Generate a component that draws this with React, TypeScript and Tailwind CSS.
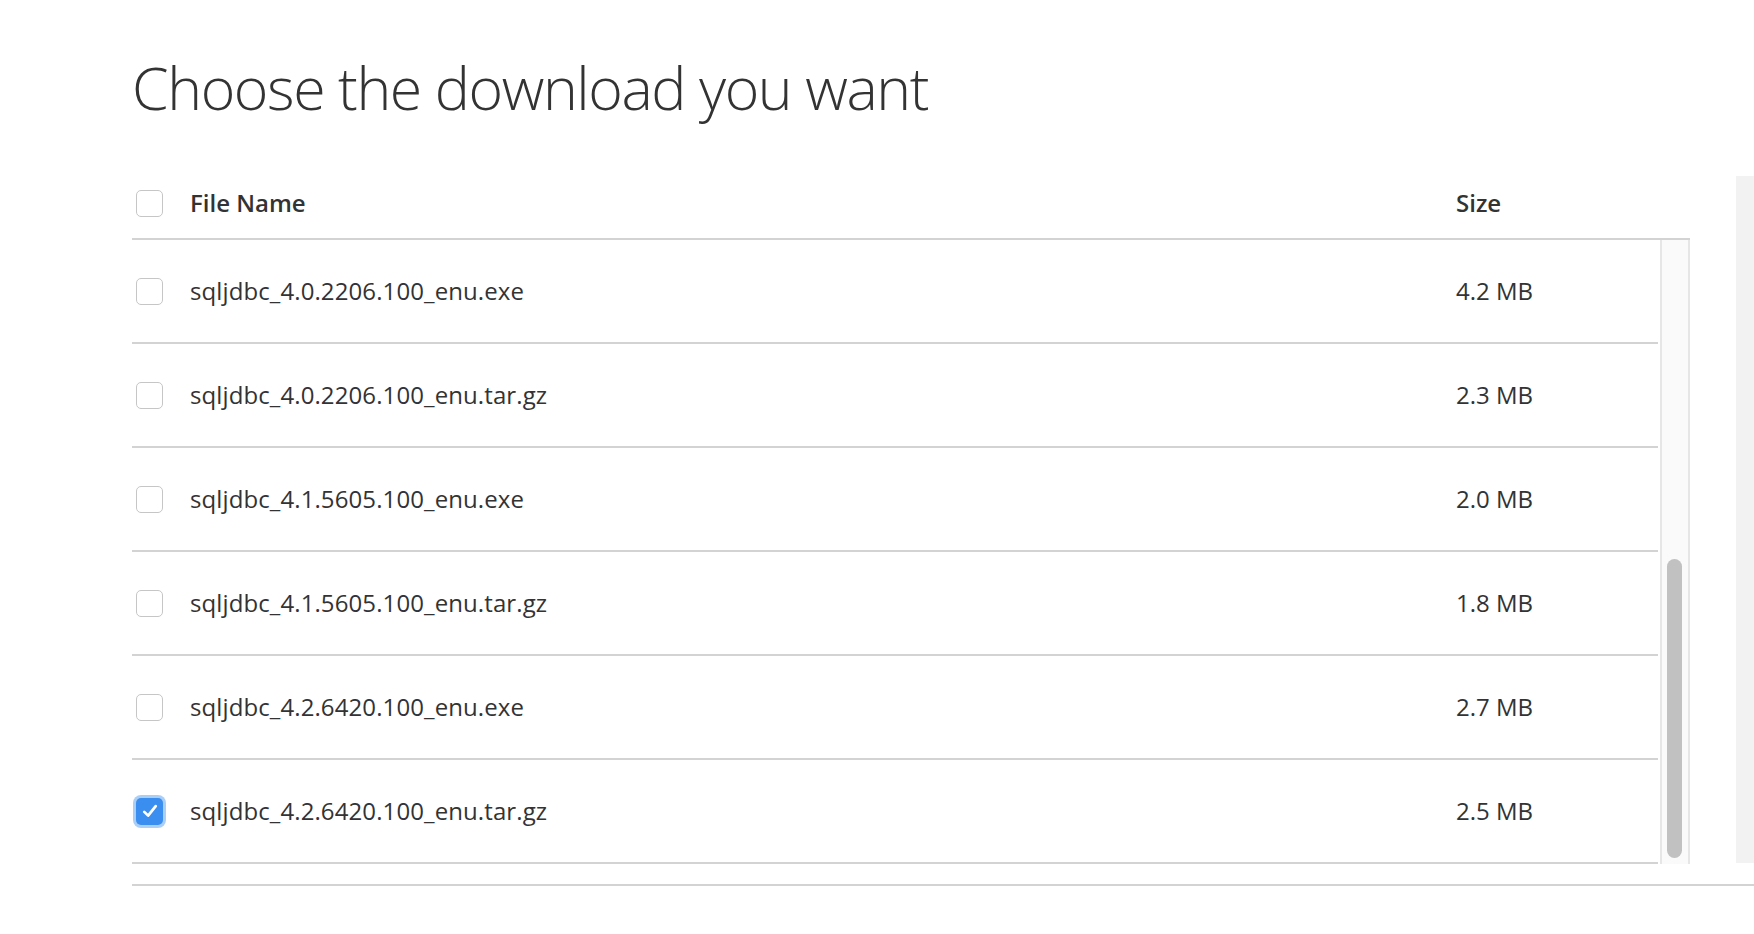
import { useState } from "react";

type FileRow = { name: string; size: string };

const FILES: FileRow[] = [
  { name: "sqljdbc_4.0.2206.100_enu.exe", size: "4.2 MB" },
  { name: "sqljdbc_4.0.2206.100_enu.tar.gz", size: "2.3 MB" },
  { name: "sqljdbc_4.1.5605.100_enu.exe", size: "2.0 MB" },
  { name: "sqljdbc_4.1.5605.100_enu.tar.gz", size: "1.8 MB" },
  { name: "sqljdbc_4.2.6420.100_enu.exe", size: "2.7 MB" },
  { name: "sqljdbc_4.2.6420.100_enu.tar.gz", size: "2.5 MB" },
];

function Checkbox({ checked, onChange }: { checked: boolean; onChange: () => void }) {
  return (
    <button
      type="button"
      role="checkbox"
      aria-checked={checked}
      onClick={onChange}
      className={`flex h-[27px] w-[27px] items-center justify-center rounded-[5px] ${
        checked
          ? "bg-[#3a8ef0] ring-[3px] ring-[#a9cff8]"
          : "border-[1.5px] border-[#c6c6c6] bg-white"
      }`}
    >
      {checked && (
        <svg viewBox="0 0 20 20" className="h-[22px] w-[22px]" fill="none">
          <path
            d="M4.8 10.8 L8.3 14.2 L15.2 5.6"
            stroke="white"
            strokeWidth="2.5"
            strokeLinecap="round"
            strokeLinejoin="round"
          />
        </svg>
      )}
    </button>
  );
}

export default function App() {
  const [selected, setSelected] = useState<Record<string, boolean>>({
    "sqljdbc_4.2.6420.100_enu.tar.gz": true,
  });
  const allChecked = FILES.every((f) => selected[f.name]);

  const toggle = (name: string) =>
    setSelected((s) => ({ ...s, [name]: !s[name] }));

  return (
    <div className="min-h-screen bg-white pl-[132px] pt-[58px] font-['Open_Sans',sans-serif] text-[#333]">
      <h1 className="text-[59px] font-light leading-none tracking-[-1.4px]">
        Choose the download you want
      </h1>

      <div className="mt-[53px] flex">
        <div className="w-[1558px]">
          {/* header */}
          <div className="flex h-[70px] items-center border-b-2 border-[#d3d3d3] pb-[2px]">
            <div className="w-[58px] pl-[4px]">
              <Checkbox
                checked={allChecked}
                onChange={() => {
                  const next: Record<string, boolean> = {};
                  FILES.forEach((f) => (next[f.name] = !allChecked));
                  setSelected(next);
                }}
              />
            </div>
            <div className="flex-1 text-[24px] font-semibold leading-8">File Name</div>
            <div className="w-[234px] text-[24px] font-semibold leading-8">Size</div>
          </div>

          {/* body + scrollbar */}
          <div className="flex">
            <div className="w-[1526px]">
              {FILES.map((f) => (
                <div
                  key={f.name}
                  className="flex h-[104px] items-center border-b-2 border-[#d3d3d3]"
                >
                  <div className="w-[58px] pl-[4px]">
                    <Checkbox checked={!!selected[f.name]} onChange={() => toggle(f.name)} />
                  </div>
                  <div className="flex-1 text-[24px] leading-8 tracking-[0.1px]">{f.name}</div>
                  <div className="w-[202px] text-[24px] leading-8">{f.size}</div>
                </div>
              ))}
            </div>
            <div className="ml-[2px] flex w-[30px] flex-col justify-end border-x-2 border-x-[#e6e6e6] bg-[#fafafa] px-[5px] pb-[6px]">
              <div className="h-[299px] w-[15px] rounded-full bg-[#c1c1c1]" />
            </div>
          </div>
        </div>

        <div className="ml-[46px] mt-[6px] mb-[1px] w-[18px] bg-[#f2f2f2]" />
      </div>

      <div className="mt-[20px] border-t-2 border-[#d3d3d3]" />
    </div>
  );
}
